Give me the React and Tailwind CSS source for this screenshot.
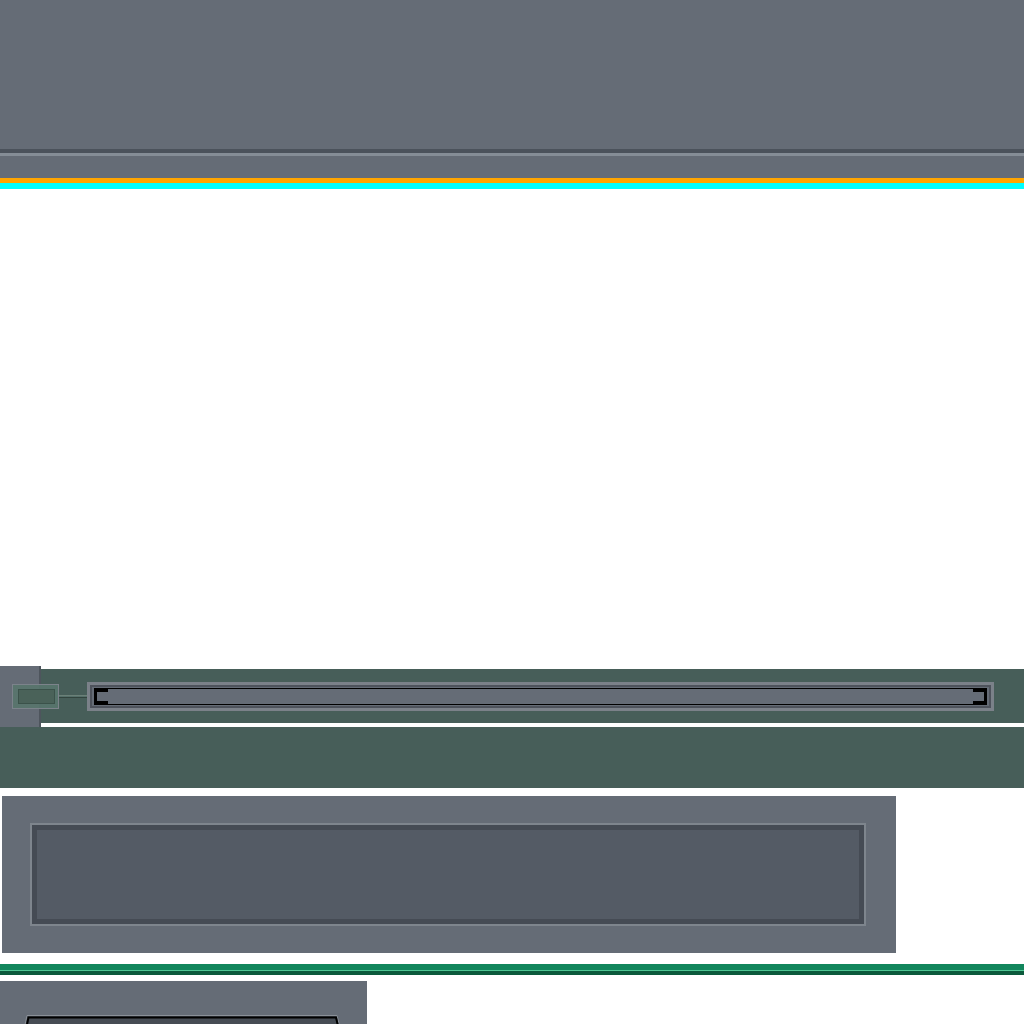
export default function App() {
  return (
    <div className="w-[1024px] min-h-[1024px] bg-white overflow-hidden font-['Liberation_Sans',sans-serif]">
      {/* top header */}
      <div className="h-[149px] bg-[#656c76]" />
      <div className="h-[4px] bg-[#4b525b]" />
      <div className="h-[3px] bg-[#858d96]" />
      <div className="h-[22px] bg-[#656c76]" />
      <div className="h-[5px] bg-[#ffa500]" />
      <div className="h-[6px] bg-[#00ffff]" />

      {/* empty content */}
      <div className="h-[477px]" />

      {/* slider bar */}
      <div className="relative flex h-[61px]">
        <div className="w-[41px] bg-[#656c76] border-r-2 border-[#4e555d]" />
        <div className="flex-1 flex flex-col">
          <div className="h-[3px] bg-white" />
          <div className="h-[54px] bg-[#475e59] pl-[46px] pr-[30px] pt-[13px]">
            <div className="h-[29px] border-[3px] border-[#7b8189]">
              <div className="h-full border-2 border-[#4e535c] bg-[#656c76] px-[2px] pt-[1px]">
                <div className="relative h-[17px] border-y border-black">
                  <div className="absolute -top-px -bottom-px left-0 w-[14px] border-l-[3px] border-y-4 border-black" />
                  <div className="absolute -top-px -bottom-px right-0 w-[14px] border-r-[3px] border-y-4 border-black" />
                </div>
              </div>
            </div>
          </div>
          <div className="h-[4px] bg-white" />
        </div>

        {/* knob box overlaying the edge */}
        <div className="absolute left-[12px] top-[18px] w-[47px] h-[25px] border border-[#7c838b] bg-[#58766d]/90 pl-[5px] pt-[4px]">
          <div className="w-[37px] h-[15px] border border-[#3b524a] bg-[#4a6259]" />
        </div>
        <div className="absolute left-[59px] top-[29px] w-[28px] h-[3px] flex flex-col">
          <div className="h-[1px] bg-[#6b8078]" />
          <div className="h-[1px] bg-[#56706a]" />
          <div className="h-[1px] bg-[#32443e]" />
        </div>
      </div>

      <div className="h-[61px] bg-[#475e59]" />
      <div className="h-[8px]" />

      {/* middle panel */}
      <div className="ml-[2px] w-[894px] h-[157px] bg-[#656c76] pl-[28px] pt-[27px]">
        <div className="w-[836px] h-[103px] border-2 border-[#7e858d]">
          <div className="h-full border-[5px] border-[#454b54] bg-[#545b65]" />
        </div>
      </div>

      <div className="h-[11px]" />
      <div className="h-[6px] bg-[#12865c]" />
      <div className="h-[1px] bg-[#4fc794]" />
      <div className="h-[4px] bg-[#0b5a3c]" />
      <div className="h-[6px]" />

      {/* bottom panel */}
      <div className="w-[367px] h-[60px] bg-[#656c76] pt-[34px] pl-[21px]">
        <svg width="323" height="26" viewBox="0 0 323 26" className="block">
          <path d="M0 26 L6 0.5 L316 0.5 L323 26 Z" fill="#464c54" />
          <path d="M0.5 26 L6 0.5 L316 0.5 L322.5 26" fill="none" stroke="#8a9098" strokeWidth="1" />
          <path d="M2.5 26 L7.5 2.5 L315 2.5 L320.5 26" fill="none" stroke="#000" strokeWidth="2" />
        </svg>
      </div>
    </div>
  );
}
